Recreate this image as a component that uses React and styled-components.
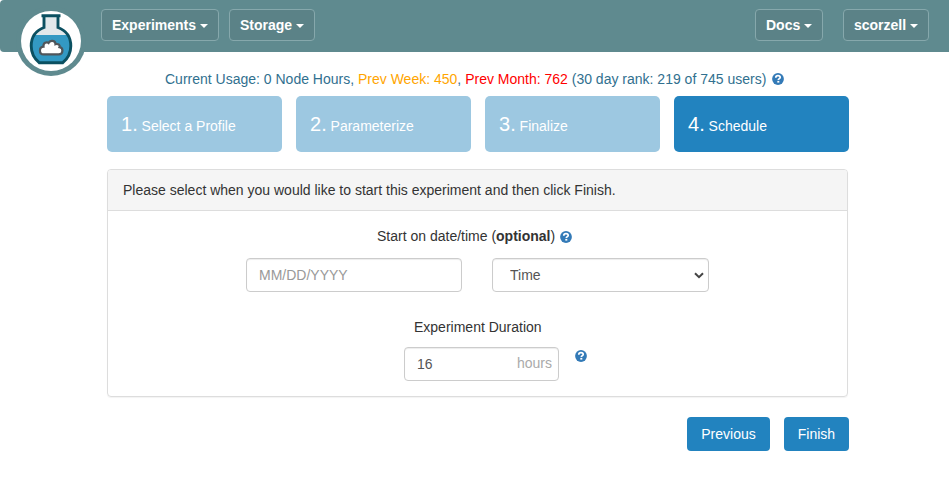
import React from 'react';
import styled, { createGlobalStyle } from 'styled-components';

const GlobalStyle = createGlobalStyle`
  *, *::before, *::after { box-sizing: border-box; }
  body {
    margin: 0;
    background: #fff;
    color: #333;
    font: 14px/20px "Liberation Sans", Arial, sans-serif;
  }
  input, select, button { font: inherit; margin: 0; }
`;

const Page = styled.div`
  height: 486px;
  overflow: hidden;
`;

const Navbar = styled.nav`
  position: relative;
  display: flex;
  align-items: flex-start;
  height: 52px;
  padding: 9px 20px 0 101px;
  background: #5f8a8f;
  border-radius: 4px 0 0 4px;
`;

const Logo = styled.svg`
  position: absolute;
  left: 16px;
  top: 6px;
  width: 70px;
  height: 70px;
`;

const NavButton = styled.button`
  display: flex;
  align-items: center;
  width: ${(p) => p.$width}px;
  height: 32px;
  margin-left: ${(p) => p.$gap || '0'};
  padding: 0 0 0 10px;
  border: 1px solid #86a8ac;
  border-radius: 4px;
  background: #5b8287;
  color: #fff;
  font-weight: bold;
  white-space: nowrap;
`;

const Caret = styled.span`
  margin-left: 4px;
  margin-top: 1px;
  border-top: 4px solid #fff;
  border-left: 4px solid transparent;
  border-right: 4px solid transparent;
`;

const Usage = styled.div`
  display: flex;
  align-items: center;
  margin: 17px 0 7px 165px;
  height: 20px;
  color: #31708f;
  white-space: pre;
`;

const Amount = styled.span`
  color: ${(p) => p.$color};
`;

const HelpSvg = styled.svg`
  flex: none;
  width: 12px;
  height: 12px;
  margin-left: ${(p) => p.$gap}px;
  margin-top: ${(p) => p.$drop || 0}px;
`;

const Content = styled.main`
  width: 742px;
  margin-left: 107px;
`;

const Steps = styled.div`
  display: grid;
  grid-template-columns: repeat(4, 175px);
  gap: 14px;
`;

const Step = styled.div`
  height: 56px;
  padding: 13px 14px;
  border-radius: 5px;
  background: ${(p) => (p.$active ? '#2283bf' : '#9dc8e1')};
  color: #fff;
  line-height: 30px;
  white-space: nowrap;
`;

const StepNumber = styled.span`
  font-size: 20px;
`;

const Panel = styled.section`
  width: 741px;
  height: 228px;
  margin-top: 17px;
  border: 1px solid #ddd;
  border-radius: 4px;
  box-shadow: 0 1px 1px rgba(0, 0, 0, 0.05);
`;

const PanelHeading = styled.header`
  height: 41px;
  padding: 10px 15px;
  border-bottom: 1px solid #ddd;
  border-radius: 3px 3px 0 0;
  background: #f5f5f5;
`;

const FieldLabel = styled.div`
  display: flex;
  align-items: center;
  height: 20px;
  margin: ${(p) => p.$margin};
  white-space: pre;
`;

const Fields = styled.div`
  display: flex;
  gap: 30px;
  margin: 12px 0 0 138px;
`;

const Control = styled.div`
  display: flex;
  align-items: center;
  width: ${(p) => p.$width}px;
  height: 34px;
  border: 1px solid #ccc;
  border-radius: 4px;
  background: #fff;
  box-shadow: inset 0 1px 1px rgba(0, 0, 0, 0.075);
  color: #555;
`;

const TextInput = styled.input`
  flex: 1;
  min-width: 0;
  height: 32px;
  padding: 0 12px;
  border: 0;
  outline: 0;
  background: transparent;
  color: #555;
  &::placeholder { color: #999; opacity: 1; }
`;

const TimeSelect = styled.select`
  flex: 1;
  height: 32px;
  padding: 0 0 0 17px;
  border: 0;
  appearance: none;
  background: transparent;
  color: #555;
`;

const Chevron = styled.svg`
  flex: none;
  width: 10px;
  height: 7px;
  margin-right: 4px;
`;

const Unit = styled.span`
  flex: none;
  margin-right: 6px;
  padding-bottom: 2px;
  color: #aaa;
`;

const DurationRow = styled.div`
  display: flex;
  margin: 10px 0 0 296px;
`;

const Actions = styled.div`
  display: flex;
  justify-content: flex-end;
  gap: 14px;
  margin-top: 20px;
`;

const ActionButton = styled.button`
  width: ${(p) => p.$width}px;
  height: 34px;
  padding: 0;
  border: 0;
  border-radius: 4px;
  background: #2283bf;
  color: #fff;
`;

const HelpIcon = ({ gap, drop }) => (
  <HelpSvg $gap={gap} $drop={drop} viewBox="0 0 12 12">
    <circle cx="6" cy="6" r="5.9" fill="#337ab7" />
    <path d="M3.800 4.700C3.800 3.200 4.800 2.700 6 2.700s2.200.6 2.200 1.700C8.200 5.600 6.300 5.600 6.300 7" fill="none" stroke="#fff" strokeWidth="1.700" />
    <rect x="5.300" y="7.900" width="2" height="1.700" fill="#fff" />
  </HelpSvg>
);

const FlaskLogo = () => (
  <Logo viewBox="0 0 70 70">
    <circle cx="35" cy="35" r="35" fill="#5f8a8f" />
    <circle cx="35" cy="35" r="30" fill="#fff" />
    <path d="M28 10h14v11.500c8 3 13 9.500 13 18.500 0 7-3 12.500-8 17H23c-5-4.500-8-10-8-17 0-9 5-15.500 13-18.500z" fill="#e1e8eb" />
    <path d="M18 29h34c2 3 3 6.500 3 11 0 7-3 12.500-8 17H23c-5-4.500-8-10-8-17 0-4.500 1-8 3-11z" fill="#3399c3" />
    <path d="M25.500 9.800h19M28 10v11.500C20 24.500 15.200 31 15.200 40c0 7 3 12.500 8 16.700h23.600c5-4.200 8-9.700 8-16.700 0-9-4.800-15.500-12.800-18.500V10" fill="none" stroke="#0b5061" strokeWidth="2.900" />
    <path d="M27.500 48.700c-4.700 0-4.800-7.200 0-7.700-.5-4 3.200-5.200 5-3.700 1.600-3.500 7.200-2.500 7 1.200 3-.8 4.800 1 4 3 4 .5 4 7.200-.8 7.200z" fill="#fff" stroke="#50565b" strokeWidth="2.200" transform="translate(0 -.3)" />
  </Logo>
);

const STEPS = ['Select a Profile', 'Parameterize', 'Finalize', 'Schedule'];

export default function App() {
  return (
    <Page>
      <GlobalStyle />
      <Navbar>
        <FlaskLogo />
        <NavButton $width={118}>Experiments<Caret /></NavButton>
        <NavButton $width={86} $gap="10px">Storage<Caret /></NavButton>
        <NavButton $width={68} $gap="auto">Docs<Caret /></NavButton>
        <NavButton $width={86} $gap="20px">scorzell<Caret /></NavButton>
      </Navbar>
      <Usage>
        <span>Current Usage: 0 Node Hours, <Amount $color="orange">Prev Week: 450</Amount>, <Amount $color="red">Prev Month: 762</Amount> (30 day rank: 219 of 745 users)</span>
        <HelpIcon gap={6} />
      </Usage>
      <Content>
        <Steps>
          {STEPS.map((name, i) => (
            <Step key={name} $active={i === 3}>
              <StepNumber>{i + 1}.</StepNumber> {name}
            </Step>
          ))}
        </Steps>
        <Panel>
          <PanelHeading>Please select when you would like to start this experiment and then click Finish.</PanelHeading>
          <FieldLabel $margin="15px 0 0 269px">
            <span>Start on date/time (<b>optional</b>)</span>
            <HelpIcon gap={5} drop={1} />
          </FieldLabel>
          <Fields>
            <Control $width={216}><TextInput placeholder="MM/DD/YYYY" /></Control>
            <Control $width={217}>
              <TimeSelect><option>Time</option></TimeSelect>
              <Chevron viewBox="0 0 10 7"><path d="M1 1.200l4 4 4-4" fill="none" stroke="#444" strokeWidth="2" /></Chevron>
            </Control>
          </Fields>
          <FieldLabel $margin="25px 0 0 306px">Experiment Duration</FieldLabel>
          <DurationRow>
            <Control $width={155}>
              <TextInput defaultValue="16" />
              <Unit>hours</Unit>
            </Control>
            <HelpIcon gap={16} drop={3} />
          </DurationRow>
        </Panel>
        <Actions>
          <ActionButton $width={83}>Previous</ActionButton>
          <ActionButton $width={65}>Finish</ActionButton>
        </Actions>
      </Content>
    </Page>
  );
}
